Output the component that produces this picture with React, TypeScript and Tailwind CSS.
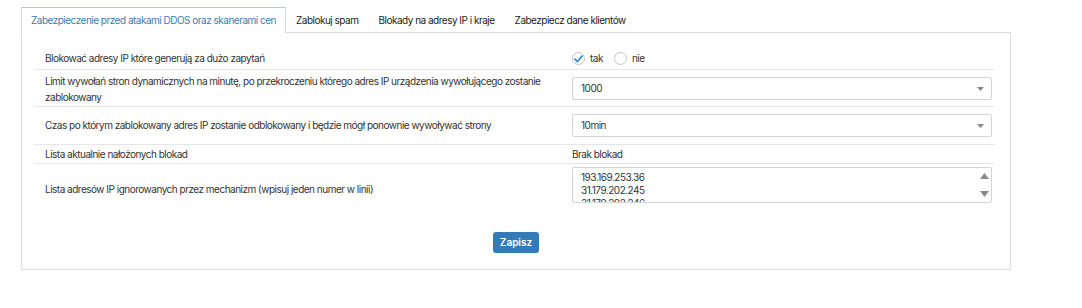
import React, { useState } from 'react';

const tabs = [
  'Zabezpieczenie przed atakami DDOS oraz skanerami cen',
  'Zablokuj spam',
  'Blokady na adresy IP i kraje',
  'Zabezpiecz dane klientów',
];

const ips = ['193.169.253.36', '31.179.202.245', '31.179.202.246', '91.212.10.4'];

function Caret() {
  return (
    <svg width="7" height="4" viewBox="0 0 7 4" className="text-[#888]">
      <path d="M0 0h7L3.5 4z" fill="currentColor" />
    </svg>
  );
}

function Radio({ checked, label, onClick }: { checked: boolean; label: string; onClick: () => void }) {
  return (
    <button type="button" onClick={onClick} className="flex items-center gap-[5px]">
      <span className="w-[13px] h-[13px] rounded-full border border-[#c4c4c4] bg-white flex items-center justify-center">
        {checked && (
          <svg width="9" height="8" viewBox="0 0 9 8">
            <path d="M1 4.2l2.4 2.3L8 1.2" stroke="#2f8ed8" strokeWidth="1.8" fill="none" strokeLinecap="round" strokeLinejoin="round" />
          </svg>
        )}
      </span>
      <span>{label}</span>
    </button>
  );
}

export default function App() {
  const [active, setActive] = useState(0);
  const [block, setBlock] = useState(true);

  return (
    <div className="w-[1082px] h-[308px] bg-white pt-[7px] pl-[21px] text-[10px] tracking-[-0.5px] text-[#333] font-['Inter','Liberation_Sans',sans-serif]">
      <div className="w-[990px]">
        {/* Tabs */}
        <div className="flex h-[26px] border-b border-[#ddd]">
          {tabs.map((t, i) => (
            <button
              key={t}
              type="button"
              onClick={() => setActive(i)}
              className={`whitespace-nowrap ${
                i === active
                  ? 'bg-white border border-[#d5d9de] border-t-[#b9c6d3] border-b-white -mb-px h-[27px] px-[9px] text-[#3f7ab3]'
                  : 'h-[26px] px-[10px] text-[#222]'
              }`}
            >
              {t}
            </button>
          ))}
        </div>

        {/* Panel */}
        <div className="h-[237px] border-x border-b border-[#ddd] pt-[14px] pl-[12px] pr-[15px]">
          <div className="flex items-center h-[23px] border-b border-[#e6e6e6]">
            <div className="w-[538px] pl-[11px]">Blokować adresy IP które generują za dużo zapytań</div>
            <div className="flex items-center gap-[11px] pt-[1px]">
              <Radio checked={block} label="tak" onClick={() => setBlock(true)} />
              <Radio checked={!block} label="nie" onClick={() => setBlock(false)} />
            </div>
          </div>

          <div className="flex items-start h-[37px] border-b border-[#e6e6e6] pt-[3px]">
            <div className="w-[538px] pl-[11px] pr-[18px] leading-[16px]">
              Limit wywołań stron dynamicznych na minutę, po przekroczeniu którego adres IP urządzenia wywołującego zostanie zablokowany
            </div>
            <div className="mt-[4px] w-[420px] h-[23px] border border-[#d4d4d4] rounded-[2px] flex items-center justify-between pl-[8px] pr-[7px]">
              <span>1000</span>
              <Caret />
            </div>
          </div>

          <div className="flex items-center h-[38px] border-b border-[#e6e6e6]">
            <div className="w-[538px] pl-[11px]">
              Czas po którym zablokowany adres IP zostanie odblokowany i będzie mógł ponownie wywoływać strony
            </div>
            <div className="w-[420px] h-[23px] border border-[#d4d4d4] rounded-[2px] flex items-center justify-between pl-[8px] pr-[7px]">
              <span>10min</span>
              <Caret />
            </div>
          </div>

          <div className="flex items-center h-[19px] border-b border-[#e6e6e6]">
            <div className="w-[538px] pl-[11px]">Lista aktualnie nałożonych blokad</div>
            <div>Brak blokad</div>
          </div>

          <div className="flex items-start pt-[3px]">
            <div className="w-[538px] pl-[11px] pt-[15px]">
              Lista adresów IP ignorowanych przez mechanizm (wpisuj jeden numer w linii)
            </div>
            <div className="w-[420px] h-[36px] border border-[#d4d4d4] rounded-[2px] flex overflow-hidden">
              <div className="flex-1 pl-[8px] pt-[3px] leading-[13px]">
                {ips.map((ip) => (
                  <div key={ip}>{ip}</div>
                ))}
              </div>
              <div className="w-[14px] flex flex-col items-center justify-between py-[5px]">
                <svg width="9" height="6" viewBox="0 0 9 6">
                  <path d="M0 6h9L4.5 0z" fill="#8a8a8a" />
                </svg>
                <svg width="9" height="6" viewBox="0 0 9 6">
                  <path d="M0 0h9L4.5 6z" fill="#8a8a8a" />
                </svg>
              </div>
            </div>
          </div>

          <div className="flex justify-center mt-[29px] pl-[3px]">
            <button
              type="button"
              className="w-[46px] h-[21px] rounded-[3px] bg-[#337ab7] text-white font-semibold tracking-normal"
            >
              Zapisz
            </button>
          </div>
        </div>
      </div>
    </div>
  );
}
